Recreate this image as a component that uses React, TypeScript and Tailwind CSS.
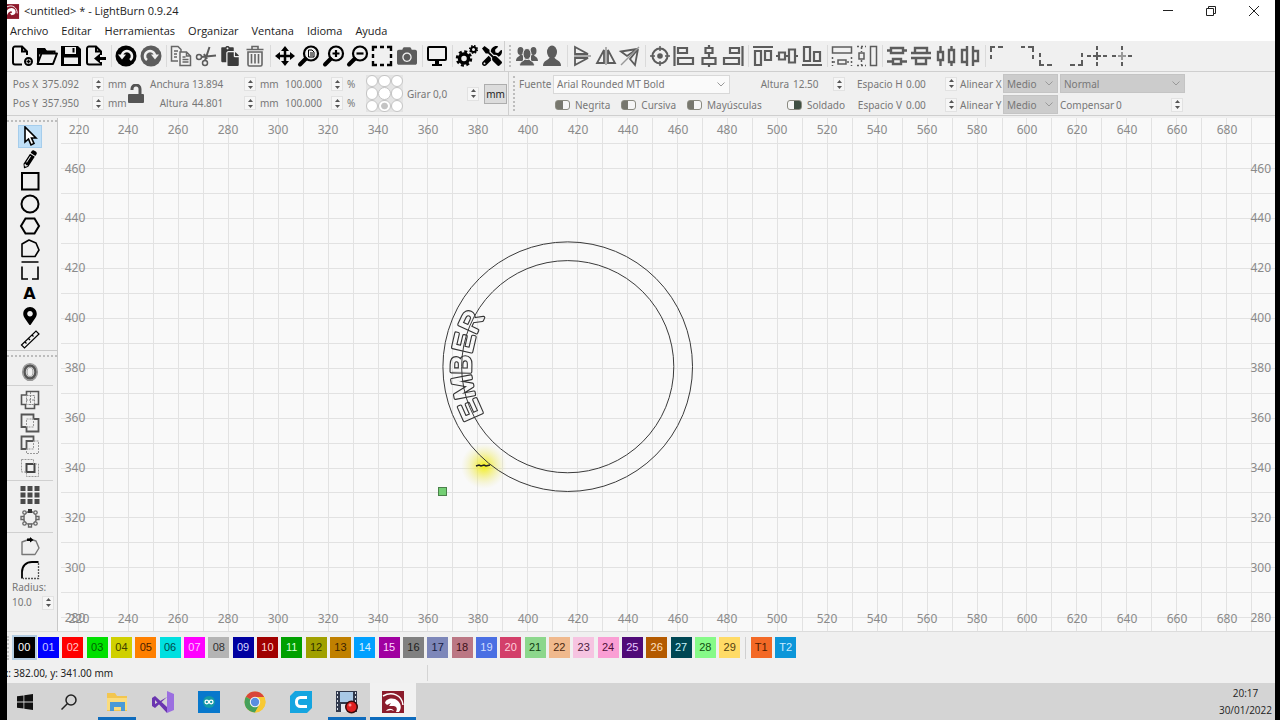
import React, { useId } from 'react';
import { FaCamera, FaMapMarkerAlt, FaPaste, FaPencilAlt, FaTools } from 'react-icons/fa';

const GRAY = '#5c5c5c';

interface IconProps {
  children: React.ReactNode;
  color?: string;
  sw?: number;
}

// Every toolbar icon is drawn on a 24 x 24 grid
const Ico: React.FC<IconProps> = ({ children, color = '#000', sw = 2 }) => (
  <svg
    viewBox="0 0 24 24"
    className="w-6 h-6 shrink-0"
    fill="none"
    stroke={color}
    strokeWidth={sw}
    aria-hidden="true"
  >
    {children}
  </svg>
);

const magnifier = (
  <>
    <circle cx="14" cy="9.5" r="7" />
    <path d="M8.5 15L3 20.5" strokeWidth="4" strokeLinecap="round" />
  </>
);

interface Tool {
  name: string;
  icon: React.ReactNode;
}

const fileTools: Tool[] = [
  {
    name: 'Nuevo',
    icon: (
      <Ico>
        <path d="M12 20.5H5a2 2 0 0 1-2-2V4.5a2 2 0 0 1 2-2h7l5 5V11M12 2.5v5h5" />
        <circle cx="18.5" cy="17.5" r="3.5" />
        <path d="M18.5 15.5v4M16.5 17.5h4" strokeWidth="1.5" />
      </Ico>
    ),
  },
  {
    name: 'Abrir',
    icon: (
      <Ico>
        <path d="M3 19V5h6l2 2.5h8.5V10" />
        <path d="M6.5 9.5H22L18 20H2.5z" fill="#f0f0f0" strokeLinejoin="round" />
        <path d="M2 12V4h8l2 3h6v2H7z" fill="#000" stroke="none" />
      </Ico>
    ),
  },
  {
    name: 'Guardar',
    icon: (
      <Ico>
        <path d="M2 2h17l3 3v17H2z" fill="#000" stroke="none" />
        <path d="M6 3h11v7H6zM5 13.5h14V20H5z" fill="#f0f0f0" stroke="none" />
        <path d="M14.5 4v4.5" />
      </Ico>
    ),
  },
  {
    name: 'Importar',
    icon: (
      <Ico>
        <path d="M17 18v2.5H5a2 2 0 0 1-2-2V4.5a2 2 0 0 1 2-2h7l5 5V11M12 2.5v5h5" />
        <path d="M22 14.5H14" strokeWidth="3" />
        <path d="M10 14.5l6-5v10z" fill="#000" stroke="none" />
      </Ico>
    ),
  },
];

const historyTools: Tool[] = [
  {
    name: 'Deshacer',
    icon: (
      <Ico>
        <circle cx="12" cy="12" r="10.5" fill="#000" stroke="none" />
        <path d="M8 12a5 5 0 1 1 8 4" stroke="#f0f0f0" strokeWidth="2.5" />
        <path d="M4 10.5h8l-4 5z" fill="#f0f0f0" stroke="none" />
      </Ico>
    ),
  },
  {
    name: 'Rehacer',
    icon: (
      <Ico>
        <circle cx="12" cy="12" r="10.5" fill={GRAY} stroke="none" />
        <path d="M16 12a5 5 0 1 0-8 4" stroke="#f0f0f0" strokeWidth="2.5" />
        <path d="M20 10.5h-8l4 5z" fill="#f0f0f0" stroke="none" />
      </Ico>
    ),
  },
];

const editTools: Tool[] = [
  {
    name: 'Copiar',
    icon: (
      <Ico color="#666" sw={1.5}>
        <path d="M9 17H2.5V2.5H9l3 3V8M5 7h4M5 10h3M5 13h3" />
        <path d="M11 8h6.5l4 4v9.5H11zM17.5 8v4h4M13.5 13h3M13.5 15.5h6M13.5 18h6" />
      </Ico>
    ),
  },
  {
    name: 'Cortar',
    icon: (
      <Ico color={GRAY}>
        <circle cx="5" cy="13" r="2.5" strokeWidth="1.5" />
        <circle cx="11" cy="19" r="2.5" strokeWidth="1.5" />
        <path d="M7 13l15-1.5M11 16.5L15.5 3M10 10l3 5" />
      </Ico>
    ),
  },
  { name: 'Pegar', icon: <FaPaste className="w-5 h-5 text-[#3c3c3c]" /> },
  {
    name: 'Borrar',
    icon: (
      <Ico color="#666" sw={1.6}>
        <path d="M3.5 5.5h17M9 5V2.5h6V5M5 8v12.5A1.5 1.5 0 0 0 6.5 22h11a1.5 1.5 0 0 0 1.5-1.5V8zM8.5 10v9.5M12 10v9.5M15.5 10v9.5" />
      </Ico>
    ),
  },
];

const viewTools: Tool[] = [
  {
    name: 'Mover vista',
    icon: (
      <Ico sw={2.5}>
        <path d="M12 5v14M5 12h14" />
        <path
          d="M12 2l4 5H8zM12 22l4-5H8zM2 12l5-4v8zM22 12l-5-4v8z"
          fill="#000"
          stroke="none"
        />
      </Ico>
    ),
  },
  {
    name: 'Ver página',
    icon: (
      <Ico sw={2.2}>
        {magnifier}
        <path d="M11.5 6H15l2 2v5h-5.5zM13 9h3M13 11h3" strokeWidth="1" />
      </Ico>
    ),
  },
  {
    name: 'Acercar',
    icon: (
      <Ico sw={2.2}>
        {magnifier}
        <path d="M14 6v7M10.5 9.5h7" />
      </Ico>
    ),
  },
  {
    name: 'Alejar',
    icon: (
      <Ico sw={2.2}>
        {magnifier}
        <path d="M10.5 9.5h7" />
      </Ico>
    ),
  },
  {
    name: 'Ver selección',
    icon: (
      <Ico sw={2.4}>
        <path d="M3 7V3h4M10 3h4M17 3h4v4M21 10v4M21 17v4h-4M14 21h-4M7 21H3v-4M3 14v-4" />
      </Ico>
    ),
  },
  { name: 'Cámara', icon: <FaCamera className="w-5 h-5 text-[#5c5c5c]" /> },
];

const previewTools: Tool[] = [
  {
    name: 'Vista previa',
    icon: (
      <Ico>
        <rect x="3" y="3" width="18" height="13" rx="1" />
        <path d="M12 16v4" strokeWidth="4" />
        <path d="M7 21h10" />
      </Ico>
    ),
  },
];

const settingTools: Tool[] = [
  {
    name: 'Ajustes',
    icon: (
      <Ico>
        <circle cx="9" cy="14.5" r="4.5" strokeWidth="3.5" />
        <circle cx="9" cy="14.5" r="7" strokeWidth="2.5" strokeDasharray="3 2.5" />
        <circle cx="18.5" cy="5.5" r="2.5" />
        <circle cx="18.5" cy="5.5" r="3.8" strokeWidth="1.5" strokeDasharray="1.5 1.5" />
      </Ico>
    ),
  },
  { name: 'Ajustes de máquina', icon: <FaTools className="w-5 h-5 text-black" /> },
];

const groupTools: Tool[] = [
  {
    name: 'Agrupar',
    icon: (
      <Ico color="#f0f0f0" sw={1}>
        <g fill={GRAY}>
          <ellipse cx="5.5" cy="7" rx="3" ry="4" stroke="none" />
          <ellipse cx="18.5" cy="7" rx="3" ry="4" stroke="none" />
          <path d="M1 17c0-4 3-4 4-6h3v6zM23 17c0-4-3-4-4-6h-3v6z" stroke="none" />
          <path d="M4.5 22c0-5 4-4.5 5.5-7h4c1.5 2.5 5.5 2 5.5 7z" />
          <ellipse cx="12" cy="10" rx="4" ry="5.5" />
        </g>
      </Ico>
    ),
  },
  {
    name: 'Desagrupar',
    icon: (
      <Ico>
        <g fill={GRAY} stroke="none">
          <ellipse cx="12" cy="8" rx="5" ry="6.5" />
          <path d="M3 22c0-6 5-5 7-9h4c2 4 7 3 7 9z" />
        </g>
      </Ico>
    ),
  },
];

const flipTools: Tool[] = [
  {
    name: 'Voltear vertical',
    icon: (
      <Ico color={GRAY} sw={1.8}>
        <path d="M5 3v7h13zM5 21v-7h13z" />
        <path d="M4 12h17" stroke="#999" strokeWidth="1.5" />
      </Ico>
    ),
  },
  {
    name: 'Voltear horizontal',
    icon: (
      <Ico color={GRAY} sw={1.8}>
        <path d="M3 19h7V6zM21 19h-7V6z" />
        <path d="M12 3v18" stroke="#999" strokeWidth="1.5" />
      </Ico>
    ),
  },
  {
    name: 'Reflejar en línea',
    icon: (
      <Ico color={GRAY} sw={1.8}>
        <path d="M3 7.5L19 5 9 12zM20 5l-3 16-5-6z" />
        <path d="M3 21L21 3" stroke="#999" strokeWidth="1.5" />
      </Ico>
    ),
  },
];

const alignTools: Tool[] = [
  {
    name: 'Centrar en página',
    icon: (
      <Ico color={GRAY}>
        <circle cx="12" cy="12" r="7.5" />
        <circle cx="12" cy="12" r="2.8" fill={GRAY} stroke="none" />
        <path d="M12 2v5M12 17v5M2 12h5M17 12h5" strokeWidth="1.5" />
      </Ico>
    ),
  },
  {
    name: 'Alinear izquierda',
    icon: (
      <Ico color={GRAY} sw={2.2}>
        <path d="M2.5 2v20M6 4h9v5H6zM6 14h15v6H6z" />
      </Ico>
    ),
  },
  {
    name: 'Alinear centro vertical',
    icon: (
      <Ico color={GRAY} sw={2.2}>
        <path d="M12 1v3M12 9v5M12 20v3M8.5 4h7v5h-7zM5.5 14h13v6h-13z" />
      </Ico>
    ),
  },
  {
    name: 'Alinear derecha',
    icon: (
      <Ico color={GRAY} sw={2.2}>
        <path d="M21.5 2v20M9 4h9v5H9zM3 14h15v6H3z" />
      </Ico>
    ),
  },
];

const alignRowTools: Tool[] = [
  {
    name: 'Alinear arriba',
    icon: (
      <Ico color={GRAY} sw={2.2}>
        <path d="M2 3h20M4 7h6v14H4zM14 7h6v9h-6z" />
      </Ico>
    ),
  },
  {
    name: 'Alinear centro horizontal',
    icon: (
      <Ico color={GRAY} sw={2.2}>
        <path d="M1 12h3M10 12h4M20 12h3M4 8.5h6v7H4zM14 5.5h6v13h-6z" />
      </Ico>
    ),
  },
  {
    name: 'Alinear abajo',
    icon: (
      <Ico color={GRAY} sw={2.2}>
        <path d="M2 21h20M4 3h6v14H4zM14 8h6v9h-6z" />
      </Ico>
    ),
  },
];

const sizeTools: Tool[] = [
  {
    name: 'Igualar ancho',
    icon: (
      <Ico color={GRAY} sw={1.5}>
        <path d="M2.5 3h19v6h-19zM8 16h8v4H8z" />
        <path d="M2.5 13v9M21.5 13v9M3 18h4M17 18h4" strokeDasharray="2 2" />
      </Ico>
    ),
  },
  {
    name: 'Igualar alto',
    icon: (
      <Ico color={GRAY} sw={1.5}>
        <path d="M15.5 2.5h6v19h-6zM4 9h5v6H4z" />
        <path d="M2 2.5h9M2 21.5h9M6.5 3v5M6.5 16v5" strokeDasharray="2 2" />
      </Ico>
    ),
  },
];

const distributeTools: Tool[] = [
  {
    name: 'Distribuir vertical',
    icon: (
      <Ico color={GRAY} sw={2.4}>
        <path d="M6 4h12v5H6zM8 15h8v5H8zM2 6.5h4M18 6.5h4M2 17.5h6M16 17.5h6" />
      </Ico>
    ),
  },
  {
    name: 'Juntar vertical',
    icon: (
      <Ico color={GRAY} sw={2.4}>
        <path d="M6 4h12v5H6zM7 14h10v6H7zM2 9h20M2 14h20" />
      </Ico>
    ),
  },
  {
    name: 'Distribuir horizontal',
    icon: (
      <Ico color={GRAY} sw={2.4}>
        <path d="M4 8h5v8H4zM15 6h5v12h-5zM6.5 2v6M6.5 16v6M17.5 2v4M17.5 18v4" />
      </Ico>
    ),
  },
  {
    name: 'Juntar horizontal',
    icon: (
      <Ico color={GRAY} sw={2.4}>
        <path d="M4 6h5v12H4zM15 7h5v10h-5zM9 2v20M15 2v20" />
      </Ico>
    ),
  },
];

const cornerTools: Tool[] = [
  { name: 'Esquina superior izquierda', icon: <Ico color={GRAY}><path d="M3 15v-4M3 8V3h4M10 3h5" /></Ico> },
  { name: 'Esquina superior derecha', icon: <Ico color={GRAY}><path d="M9 3h4M16 3h5v5M21 11v4" /></Ico> },
  { name: 'Esquina inferior izquierda', icon: <Ico color={GRAY}><path d="M3 9v4M3 16v5h4M10 21h5" /></Ico> },
  { name: 'Esquina inferior derecha', icon: <Ico color={GRAY}><path d="M21 9v4M21 16v5h-4M14 21H9" /></Ico> },
  { name: 'Centro de página', icon: <Ico color={GRAY}><path d="M12 2v4M12 8v8M12 18v4M2 12h4M8 12h8M18 12h4" /></Ico> },
  {
    name: 'Centro de máquina',
    icon: (
      <Ico color={GRAY}>
        <path d="M12 2v4M12 18v4M2 12h4M18 12h4" />
        <path d="M12 8v8M8 12h8" stroke="#999" />
      </Ico>
    ),
  },
];

const drawTools: Tool[] = [
  { name: 'Seleccionar', icon: <Ico sw={1.6}><path d="M7 3v15l3.5-3 2.5 6 3-1.5-2.5-5.5H18z" fill="#fff" /></Ico> },
  { name: 'Dibujar líneas', icon: <FaPencilAlt className="w-4 h-[18px] -rotate-12 text-black" /> },
  { name: 'Rectángulo', icon: <Ico><rect x="4" y="4" width="16.5" height="16.5" /></Ico> },
  { name: 'Elipse', icon: <Ico><circle cx="12" cy="12" r="8.5" /></Ico> },
  { name: 'Polígono', icon: <Ico><path d="M7.5 4.5h9L21 12l-4.5 7.5h-9L3 12z" /></Ico> },
  {
    name: 'Editar nodos',
    icon: (
      <Ico sw={1.6}>
        <path d="M4 7l7-4 7 3 3 7-4 6.5H4z" strokeLinejoin="round" />
      </Ico>
    ),
  },
  { name: 'Trazo', icon: <Ico sw={1.6}><path d="M3.5 3h17M10 20H4V7.5M14 20h6V7.5" /></Ico> },
  {
    name: 'Texto',
    icon: (
      <span className="font-['DejaVu_Sans',sans-serif] text-[16px] leading-4 font-bold text-black">A</span>
    ),
  },
  { name: 'Posición', icon: <FaMapMarkerAlt className="w-[14px] h-[18px] text-black" /> },
  {
    name: 'Medir',
    icon: (
      <Ico sw={1.2}>
        <path d="M3.5 18L18 4l3 3L6.500 21zM7 15l1.5 1.5M10.5 11.500L12 13M14 8l1.5 1.5" />
      </Ico>
    ),
  },
];

const booleanTools: Tool[] = [
  {
    name: 'Soldar',
    icon: (
      <Ico color="#555" sw={1.6}>
        <path d="M3.5 7h5V3.5h12v13h-4v4h-9v-4h-4z" />
        <path d="M8.5 7.5h8v9h-8zM12.5 4v13M8 12h9" strokeWidth="1" strokeDasharray="2 1" stroke="#888" />
      </Ico>
    ),
  },
  {
    name: 'Unión booleana',
    icon: (
      <Ico color="#555" sw={1.8}>
        <path d="M3.5 3.5h12V8h5v12.5h-12V16h-5z" />
        <path d="M8.5 8h7v8h-7z" strokeWidth="1" stroke="#999" strokeDasharray="2 1" />
      </Ico>
    ),
  },
  {
    name: 'Sustracción booleana',
    icon: (
      <Ico color="#555" sw={1.8}>
        <path d="M3.5 3.5h12V8h-7v8h-5z" />
        <path d="M15.5 8h5v12.5h-12V16h7z" strokeWidth="1" stroke="#999" strokeDasharray="2 1" />
      </Ico>
    ),
  },
  {
    name: 'Intersección booleana',
    icon: (
      <Ico color="#444" sw={2}>
        <path d="M8.5 8h8v8h-8z" />
        <path d="M3.5 3.5h12V8h5v12.5h-12V16h-5z" strokeWidth="1" stroke="#999" strokeDasharray="2 1" />
      </Ico>
    ),
  },
];

const offsetTools: Tool[] = [
  {
    name: 'Desplazar formas',
    icon: (
      <Ico color="#555" sw={2}>
        <ellipse cx="12" cy="12" rx="7.5" ry="8.5" stroke="#999" strokeWidth="1.2" />
        <ellipse cx="12" cy="12" rx="5.5" ry="6.5" strokeWidth="2.5" />
        <ellipse cx="12" cy="12" rx="3" ry="4.5" stroke="#999" strokeWidth="1" />
      </Ico>
    ),
  },
];

const arrayTools: Tool[] = [
  {
    name: 'Matriz de cuadrícula',
    icon: (
      <Ico>
        <path
          d="M2.5 3h5v5h-5zM9.5 3h5v5h-5zM16.5 3h5v5h-5zM2.5 9.5h5v5h-5zM9.5 9.5h5v5h-5zM16.5 9.5h5v5h-5zM2.5 16h5v5h-5zM9.5 16h5v5h-5zM16.5 16h5v5h-5z"
          fill="#4a4a4a"
          stroke="none"
        />
      </Ico>
    ),
  },
  {
    name: 'Matriz circular',
    icon: (
      <Ico color="#666" sw={1.3}>
        <circle cx="12" cy="12" r="6.5" />
        <g fill="#f0f0f0">
          <circle cx="17.5" cy="6.5" r="1.7" />
          <circle cx="6.5" cy="6.5" r="1.7" />
          <circle cx="17.5" cy="17.5" r="1.7" />
          <circle cx="6.5" cy="17.5" r="1.7" />
          <path d="M3 10.5h3v3H3zM18 10.5h3v3h-3zM10.5 18h3v3h-3z" />
        </g>
        <path d="M10 3h4v4h-4z" fill="#333" stroke="none" />
      </Ico>
    ),
  },
];

const shapeTools: Tool[] = [
  {
    name: 'Inicio de forma',
    icon: (
      <Ico color="#777" sw={1.4}>
        <path d="M4 7l8-3 6 2 3 7-4 6.5H4z" strokeLinejoin="round" />
        <path d="M9 3.5h3V2l3.5 3L12 7.5V6H9z" fill="#000" stroke="none" />
      </Ico>
    ),
  },
  {
    name: 'Redondear esquinas',
    icon: (
      <Ico sw={1.8}>
        <path d="M4 20.5V14C4 8 8 4 14 4h6.5" />
        <path d="M20.5 5v15.5H5" strokeWidth="1.3" strokeDasharray="2 1" stroke="#555" />
      </Ico>
    ),
  },
];

const layers = [
  ['00', '#000000', '#ffffff'], ['01', '#0000ff', '#c8c8ff'], ['02', '#ff0000', '#ffc8c8'],
  ['03', '#00e000', '#006000'], ['04', '#d0d000', '#404000'], ['05', '#ff8000', '#4a2000'],
  ['06', '#00e0e0', '#004848'], ['07', '#ff00ff', '#ffc8ff'], ['08', '#b4b4b4', '#303030'],
  ['09', '#0000a0', '#d8d8ff'], ['10', '#a00000', '#ffd8d8'], ['11', '#00a000', '#d8ffd8'],
  ['12', '#a0a000', '#303000'], ['13', '#c08000', '#3c2400'], ['14', '#00a0ff', '#d8f0ff'],
  ['15', '#a000a0', '#ffd8ff'], ['16', '#808080', '#202020'], ['17', '#7d87b9', '#181c40'],
  ['18', '#bb7784', '#3c1018'], ['19', '#4a6fe3', '#d0dcff'], ['20', '#d33f6a', '#ffd0dc'],
  ['21', '#8cd78c', '#104010'], ['22', '#f0b98d', '#4c2810'], ['23', '#f6c4e1', '#4c2040'],
  ['24', '#fa9ed4', '#501038'], ['25', '#500a78', '#e8c8ff'], ['26', '#b45a00', '#ffe0c0'],
  ['27', '#004754', '#c8f4fc'], ['28', '#86fa88', '#104c10'], ['29', '#ffdb66', '#504010'],
];

const toolLayers = [
  ['T1', '#f36926', '#501c00'], ['T2', '#0c96d9', '#c8ecff'],
];

const Divider: React.FC = () => (
  <div className="w-1.5 flex justify-center shrink-0">
    <div className="w-px h-[22px] bg-[#dadada]" />
  </div>
);

const Grip: React.FC = () => (
  <div className="w-0 h-[calc(100%-8px)] mx-1 shrink-0 border-l-2 border-dotted border-[#bdbdbd]" />
);

const ToolGroup: React.FC<{ tools: Tool[]; width: string }> = ({ tools, width }) => (
  <div className={`flex shrink-0 ${width}`}>
    {tools.map(t => (
      <button key={t.name} type="button" aria-label={t.name} className="flex-1 min-w-0 h-6 flex items-center justify-center">
        {t.icon}
      </button>
    ))}
  </div>
);

const ToolStack: React.FC<{ tools: Tool[]; height: string; active?: string }> = ({ tools, height, active }) => (
  <div className={`flex flex-col items-center shrink-0 pr-[5px] ${height}`}>
    {tools.map(t => (
      <button
        key={t.name}
        type="button"
        aria-label={t.name}
        className={`flex-1 min-h-0 w-6 flex items-center justify-center ${t.name === active ? 'bg-[#bfdff7] outline -outline-offset-1 outline-[#a5cdec]' : ''}`}
      >
        {t.icon}
      </button>
    ))}
  </div>
);

const Spinner: React.FC = () => (
  <div className="w-3 h-[14px] shrink-0 flex flex-col border border-[#e2e2e2] bg-[#f6f6f6]">
    <button type="button" aria-label="Aumentar" className="flex-1 min-h-0 flex items-center justify-center">
      <svg viewBox="0 0 5 3" className="w-[5px] h-[3px]" fill="#555"><path d="M0 3L2.5 0 5 3z" /></svg>
    </button>
    <button type="button" aria-label="Disminuir" className="flex-1 min-h-0 flex items-center justify-center">
      <svg viewBox="0 0 5 3" className="w-[5px] h-[3px]" fill="#555"><path d="M0 0h5L2.5 3z" /></svg>
    </button>
  </div>
);

interface FieldProps {
  label?: string;
  hint?: string;
  value: string;
  unit?: string;
  labelWidth?: string;
  inputWidth: string;
}

const Field: React.FC<FieldProps> = ({ label, hint, value, unit, labelWidth = '', inputWidth }) => {
  const id = useId();
  return (
    <div className="flex items-center h-[19px] whitespace-nowrap">
      {label && <label htmlFor={id} className={`mr-1 text-right ${labelWidth}`}>{label}</label>}
      <input id={id} aria-label={hint} defaultValue={value} className={`bg-transparent outline-none ${inputWidth}`} />
      <Spinner />
      {unit && <span className="ml-1 w-4">{unit}</span>}
    </div>
  );
};

const Combo: React.FC<{ label: string; value: string; className: string; id?: string }> = ({ label, value, className, id }) => (
  <div className={`relative h-[19px] border ${className}`}>
    <select id={id} aria-label={label} className="appearance-none block w-full h-full px-[3px] bg-transparent outline-none leading-4">
      <option>{value}</option>
    </select>
    <svg viewBox="0 0 8 5" className="absolute right-1 top-1.5 w-2 h-[5px] pointer-events-none" fill="none" stroke="#999">
      <path d="M.5.5L4 4 7.5.5" />
    </svg>
  </div>
);

const Toggle: React.FC<{ label: string; on?: boolean }> = ({ label, on }) => (
  <label className="flex items-center gap-[5px] whitespace-nowrap">
    <input
      type="checkbox"
      defaultChecked={on}
      className="appearance-none w-[15px] h-[10px] rounded-[3px] border border-[#8a8a80] bg-linear-to-r from-[#77776e] from-50% to-[#f6f6f6] to-50% checked:from-[#f6f6f6] checked:to-[#3f4f42]"
    />
    {label}
  </label>
);

const Titlebar: React.FC = () => (
  <header className="h-[22px] bg-white flex items-center text-[#222]">
    <svg viewBox="0 0 14 16" className="w-[13px] h-[15px] mr-1" aria-hidden="true">
      <path d="M0 0h13v16H0z" fill="#8e1a2c" />
      <path d="M0 7c3-4 8-3 9 0 1 3-1 5-4 5l-2-2c2 0 3-1 2-2-2-1-4 2-5 4z" fill="#fff" />
      <path d="M0 3c6-3 11 1 11 7" stroke="#fff" fill="none" />
    </svg>
    <h1 className="font-['Open_Sans','Noto_Sans',sans-serif] text-[11px]">&lt;untitled&gt; * - LightBurn 0.9.24</h1>
    <div className="ml-auto flex h-full">
      <button type="button" aria-label="Minimizar" className="w-[43px] flex items-center justify-center">
        <svg viewBox="0 0 10 10" className="w-[10px] h-[10px]" stroke="#222" fill="none"><path d="M0 4.5h10" /></svg>
      </button>
      <button type="button" aria-label="Restaurar" className="w-[43px] flex items-center justify-center">
        <svg viewBox="0 0 10 10" className="w-[10px] h-[10px]" stroke="#222" fill="none"><path d="M.5 2.5h7v7h-7zM2.5 2.5v-2h7v7h-2" /></svg>
      </button>
      <button type="button" aria-label="Cerrar" className="w-[43px] flex items-center justify-center">
        <svg viewBox="0 0 10 10" className="w-[10px] h-[10px]" stroke="#222" fill="none"><path d="M0 0l10 10M10 0L0 10" /></svg>
      </button>
    </div>
  </header>
);

const menus = ['Archivo', 'Editar', 'Herramientas', 'Organizar', 'Ventana', 'Idioma', 'Ayuda'];

const MenuBar: React.FC = () => (
  <nav className="h-[19px] bg-white flex items-center gap-[13px] pl-[3px] font-['Open_Sans','Noto_Sans',sans-serif] text-[11px] text-[#222]">
    {menus.map(m => <button key={m} type="button">{m}</button>)}
  </nav>
);

const MainToolbar: React.FC = () => (
  <div className="h-[31px] flex items-center border-b border-[#cfcfcf] pl-[3px]">
    <ToolGroup tools={fileTools} width="w-[98px]" />
    <Divider />
    <ToolGroup tools={historyTools} width="w-[49px]" />
    <Divider />
    <ToolGroup tools={editTools} width="w-[98px]" />
    <Divider />
    <ToolGroup tools={viewTools} width="w-[146px]" />
    <Divider />
    <ToolGroup tools={previewTools} width="w-6" />
    <Divider />
    <ToolGroup tools={settingTools} width="w-[49px]" />
    <div className="w-px h-full bg-[#cfcfcf]" />
    <Grip />
    <ToolGroup tools={groupTools} width="w-[49px]" />
    <Divider />
    <ToolGroup tools={flipTools} width="w-[72px]" />
    <Divider />
    <ToolGroup tools={alignTools} width="w-[97px]" />
    <Divider />
    <ToolGroup tools={alignRowTools} width="w-[73px]" />
    <Divider />
    <ToolGroup tools={sizeTools} width="w-[49px]" />
    <Divider />
    <ToolGroup tools={distributeTools} width="w-[97px]" />
    <Divider />
    <ToolGroup tools={cornerTools} width="w-[146px]" />
  </div>
);

const anchors = ['SI', 'S', 'SD', 'I', 'C', 'D', 'II', 'B', 'ID'];

const PropertiesBar: React.FC = () => {
  const fontId = useId();
  return (
    <div className="h-11 flex items-center border-b border-[#cfcfcf] pl-[5px] text-[10px] leading-4 text-[#777]">
      <div>
        <Field label="Pos X" value="375.092" unit="mm" labelWidth="w-[26px]" inputWidth="w-[50px]" />
        <Field label="Pos Y" value="357.950" unit="mm" labelWidth="w-[26px]" inputWidth="w-[50px]" />
      </div>
      <button type="button" aria-label="Bloquear proporción" className="ml-1 mr-1.5">
        <svg viewBox="0 0 16 20" className="w-4 h-5" fill="none" stroke="#555" strokeWidth="3">
          <path d="M4 6V5a4 4 0 0 1 8 0v6" />
          <rect x="0" y="10" width="16" height="9" rx="1" fill="#555" stroke="none" />
        </svg>
      </button>
      <div>
        <Field label="Anchura" value="13.894" unit="mm" labelWidth="w-[38px]" inputWidth="w-[52px]" />
        <Field label="Altura" value="44.801" unit="mm" labelWidth="w-[38px]" inputWidth="w-[52px]" />
      </div>
      <div className="ml-[9px]">
        <Field hint="Escala horizontal" value="100.000" unit="%" inputWidth="w-[46px]" />
        <Field hint="Escala vertical" value="100.000" unit="%" inputWidth="w-[46px]" />
      </div>
      <div className="ml-[3px] w-[37px] h-[37px] grid grid-cols-3 bg-[#e4e4e4]">
        {anchors.map(a => (
          <input
            key={a}
            type="radio"
            name="anchor"
            aria-label={a}
            defaultChecked={a === 'B'}
            className="appearance-none rounded-full border border-[#c4c4c4] bg-white checked:bg-[radial-gradient(circle,#c4c4c4_40%,#fff_50%)]"
          />
        ))}
      </div>
      <div className="ml-1 mr-[5px]">
        <Field label="Girar" value="0,0" labelWidth="w-[22px]" inputWidth="w-[34px]" />
      </div>
      <button type="button" className="w-[23px] h-5 border border-[#adadad] bg-[#dcdcdc] text-[#222]">mm</button>
      <div className="ml-px w-px h-full bg-[#cfcfcf]" />
      <Grip />
      <div className="w-[326px] pt-0.5 flex flex-col gap-px">
        <div className="flex items-center">
          <label htmlFor={fontId} className="w-[34px]">Fuente</label>
          <Combo id={fontId} label="Fuente" value="Arial Rounded MT Bold" className="w-[177px] border-[#d8d8d8] bg-[#fafafa]" />
          <div className="ml-auto">
            <Field label="Altura" value="12.50" labelWidth="w-[29px]" inputWidth="w-[40px]" />
          </div>
        </div>
        <div className="flex items-center h-5 pl-9 gap-[11px]">
          <Toggle label="Negrita" />
          <Toggle label="Cursiva" />
          <Toggle label="Mayúsculas" />
          <div className="ml-auto"><Toggle label="Soldado" on /></div>
        </div>
      </div>
      <div className="ml-3 pt-px flex flex-col gap-0.5">
        <Field label="Espacio H" value="0.00" labelWidth="w-[45px]" inputWidth="w-[39px]" />
        <Field label="Espacio V" value="0.00" labelWidth="w-[45px]" inputWidth="w-[39px]" />
      </div>
      <div className="ml-[3px] pt-px flex flex-col gap-0.5">
        {['X', 'Y'].map(axis => (
          <div key={axis} className="flex items-center whitespace-nowrap">
            <span className="w-[43px]">Alinear {axis}</span>
            <Combo label={`Alinear ${axis}`} value="Medio" className="w-[55px] border-[#c4c4c4] bg-[#cccccc]" />
          </div>
        ))}
      </div>
      <div className="ml-0.5 pt-px flex flex-col gap-0.5">
        <Combo label="Modo" value="Normal" className="w-[125px] border-[#c4c4c4] bg-[#cccccc]" />
        <Field label="Compensar" value="0" labelWidth="w-[52px]" inputWidth="w-[55px]" />
      </div>
    </div>
  );
};

const Sidebar: React.FC = () => (
  <aside className="w-[51px] shrink-0 border-r border-[#c8c8c8] flex flex-col text-[10px] text-[#777]">
    <div className="mt-0.5 mb-[3px] h-0 border-t-2 border-dotted border-[#bdbdbd] shrink-0" />
    <ToolStack tools={drawTools} height="h-[225px]" active="Seleccionar" />
    <div className="h-px bg-[#c8c8c8] mb-1 shrink-0" />
    <div className="h-0 border-t-2 border-dotted border-[#bdbdbd] mb-[3px] shrink-0" />
    <ToolStack tools={offsetTools} height="h-6" />
    <div className="h-px bg-[#d0d0d0] mt-px mb-[3px] mr-1 shrink-0" />
    <ToolStack tools={booleanTools} height="h-[90px]" />
    <div className="h-px bg-[#d0d0d0] mt-px mb-[3px] mr-1 shrink-0" />
    <ToolStack tools={arrayTools} height="h-[45px]" />
    <div className="h-px bg-[#d0d0d0] mt-[3px] mb-[3px] mr-1 shrink-0" />
    <ToolStack tools={shapeTools} height="h-[45px]" />
    <label htmlFor="radius" className="pl-[5px] leading-[13px]">Radius:</label>
    <div className="flex items-center pl-[5px] h-[17px]">
      <input id="radius" defaultValue="10.0" className="w-[30px] bg-transparent outline-none" />
      <Spinner />
    </div>
  </aside>
);

// Workspace millimetres to view pixels
const SCALE = 2.496;
const toX = (mm: number) => (mm - 220) * SCALE + 20.5;
const toY = (mm: number) => (460 - mm) * SCALE + 50.5;

const range = (from: number, to: number, step: number) =>
  Array.from({ length: Math.floor((to - from) / step) + 1 }, (_, i) => from + i * step);

const letters = [
  { char: 'E', angle: -114 },
  { char: 'M', angle: -101 },
  { char: 'B', angle: -89 },
  { char: 'E', angle: -77 },
  { char: 'R', angle: -65 },
];

const Workspace: React.FC = () => {
  const cx = toX(416);
  const cy = toY(380.6);
  const arcText = letters.map((l, i) => (
    <text
      key={i}
      fontFamily="'Liberation Sans', Arial, sans-serif"
      fontSize="28"
      textAnchor="middle"
      strokeLinejoin="round"
      transform={`translate(${cx} ${cy}) rotate(${l.angle}) translate(0 -97)`}
    >
      {l.char}
    </text>
  ));
  return (
    <main className="flex-1 min-w-0 relative bg-[#f9f9f9] overflow-hidden">
      <svg className="absolute inset-0 w-full h-full" fontFamily="'Noto Sans', sans-serif" fontSize="12">
        <defs>
          <radialGradient id="glow">
            <stop offset="0" stopColor="#f2ee00" stopOpacity="0.9" />
            <stop offset="0.35" stopColor="#f0ea30" stopOpacity="0.6" />
            <stop offset="1" stopColor="#e8e4a0" stopOpacity="0" />
          </radialGradient>
          {/* Cuts the inside out of the letters, so only a rounded rim is left */}
          <mask id="rim" maskUnits="userSpaceOnUse" x="370" y="170" width="80" height="160">
            <rect x="370" y="170" width="80" height="160" fill="#fff" />
            <g fill="#000" stroke="#000" strokeWidth="1.4">{arcText}</g>
          </mask>
        </defs>
        <g stroke="#e2e2e2" shapeRendering="crispEdges">
          {range(220, 690, 10).map(x => <line key={x} x1={toX(x)} x2={toX(x)} y1="0" y2="100%" />)}
          {range(280, 470, 10).map(y => <line key={y} x1="3" x2="100%" y1={toY(y)} y2={toY(y)} />)}
        </g>
        <g fill="#8a8a8a" textAnchor="middle">
          {range(220, 680, 20).map(x => <text key={x} x={Math.round(toX(x))} y="16">{x}</text>)}
          {range(280, 460, 20).map(y => <text key={y} x="17" y={Math.round(toY(y)) + 4}>{y}</text>)}
        </g>
        <g fill="#8a8a8a" textAnchor="middle">
          {range(220, 680, 20).map(x => <text key={x} x={Math.round(toX(x))} y="505">{x}</text>)}
        </g>
        <svg x="100%" overflow="visible">
          <g fill="#8a8a8a" textAnchor="end">
            {range(280, 460, 20).map(y => <text key={y} x="-4" y={Math.round(toY(y)) + 4}>{y}</text>)}
          </g>
        </svg>

        <circle cx="426" cy="348" r="23" fill="url(#glow)" />

        <g fill="none" stroke="#3a3a3a">
          <circle cx={cx} cy={cy} r={50 * SCALE} />
          <circle cx={cx} cy={cy} r={42.5 * SCALE} />
        </g>
        <g mask="url(#rim)" fill="#333" stroke="#333" strokeWidth="3.6">{arcText}</g>
        <path d="M418 348l3-1 2 1 3-1 2 1 4-1" stroke="#222" strokeWidth="1.5" fill="none" />
        <rect x="380.5" y="369.5" width="8" height="8" fill="#74cf74" stroke="#4a804a" />
      </svg>
    </main>
  );
};

const Swatch: React.FC<{ layer: string[]; active?: boolean }> = ({ layer, active }) => (
  <div className="flex-1 flex justify-center">
    <button
      type="button"
      className={`w-[21px] h-[21px] font-['Liberation_Sans',Arial,sans-serif] text-[11px] leading-[21px] text-center ${active ? 'outline-2 outline-[#b4cde2]' : ''}`}
      style={{ backgroundColor: layer[1], color: layer[2] }}
    >
      {layer[0]}
    </button>
  </div>
);

const Palette: React.FC = () => (
  <div className="h-8 flex items-center border-t border-[#dcdcdc]">
    <div className="h-6 w-0 border-l-2 border-dotted border-[#c8c8c8]" />
    <div className="ml-[3px] w-[730px] flex shrink-0">
      {layers.map((l, i) => <Swatch key={l[0]} layer={l} active={i === 0} />)}
    </div>
    <div className="ml-[3px] mr-[3px] w-px h-[22px] bg-[#d0d0d0]" />
    <div className="w-[49px] flex shrink-0">
      {toolLayers.map(l => <Swatch key={l[0]} layer={l} />)}
    </div>
  </div>
);

const StatusBar: React.FC = () => (
  <div className="h-5 flex items-center overflow-hidden text-[#222]">
    <div className="w-[421px] h-4 border-r border-[#d4d4d4] overflow-hidden">
      <span className="block -ml-1 leading-[17px] text-[10px]">x: 382.00, y: 341.00 mm</span>
    </div>
  </div>
);

interface TaskApp {
  name: string;
  running?: boolean;
  active?: boolean;
  art: React.ReactNode;
}

const taskApps: TaskApp[] = [
  {
    name: 'Explorador de archivos',
    running: true,
    art: (
      <>
        <path d="M2 3h8l2 3h10v15H2z" fill="#f3c64f" />
        <path d="M2 8h20v12H2z" fill="#fbdc7d" />
        <path d="M5 12h15v9h-4v-4H9v4H5z" fill="#4a9ad6" />
      </>
    ),
  },
  {
    name: 'Visual Studio',
    art: (
      <>
        <path d="M16 1l7 3v16l-7 3z" fill="#9b6fe0" />
        <path d="M16 1v6L4 18l-3-2V8l3-2 12 11v6L4 10v4L16 7z" fill="#6a35b0" />
      </>
    ),
  },
  {
    name: 'Arduino',
    art: (
      <>
        <path d="M1 1h22v22H1z" fill="#0878cc" />
        <circle cx="12" cy="12" r="6" fill="#149aa5" />
        <g fill="none" stroke="#fff" strokeWidth="1.3">
          <circle cx="9.8" cy="12" r="1.8" />
          <circle cx="14.2" cy="12" r="1.8" />
        </g>
      </>
    ),
  },
  {
    name: 'Chrome',
    art: (
      <>
        <circle cx="12" cy="12" r="10.5" fill="#f8c933" />
        <path d="M12 12L2.9 6.8A10.5 10.5 0 0 1 21.1 6.8z" fill="#d9453a" />
        <path d="M2.9 6.8A10.5 10.5 0 0 0 12 22.5l4.5-8z" fill="#46a05a" />
        <path d="M12 7h9.2A10.5 10.5 0 0 1 12 22.5l4.5-8z" fill="#f8c933" />
        <circle cx="12" cy="12" r="5.2" fill="#f4f4f4" />
        <circle cx="12" cy="12" r="4.2" fill="#5a8ee0" />
      </>
    ),
  },
  {
    name: 'Cura',
    art: (
      <>
        <path d="M6 1h17v17l-5 5H1V6z" fill="#15a5e0" />
        <path d="M18 7.5h-6.5a4 4 0 0 0-4 4v1a4 4 0 0 0 4 4H18" fill="none" stroke="#fff" strokeWidth="3" />
      </>
    ),
  },
  {
    name: 'Grabador de pantalla',
    running: true,
    art: (
      <>
        <path d="M1 1h21v21H1z" fill="#31394c" />
        <path d="M5 2h13v10H5z" fill="#a9c9e6" />
        <path d="M6 14h10v8H6z" fill="#e4e8ee" />
        <path d="M2.5 2v19M20.5 2v19" stroke="#dde2ea" strokeDasharray="2 2" />
        <circle cx="16.5" cy="17" r="6.5" fill="#3b0a0a" />
        <circle cx="16.5" cy="17" r="5" fill="#e02020" />
        <circle cx="15" cy="15" r="1.5" fill="#ff9090" />
      </>
    ),
  },
  {
    name: 'LightBurn',
    running: true,
    active: true,
    art: (
      <>
        <path d="M1 1h22v22H1z" fill="#8b1c2c" />
        <path d="M2 6C11 1 21 5 22 15" fill="none" stroke="#fff" strokeWidth="1.5" />
        <path d="M4 13c1-5 9-6 13-2 3 3 4 7 1 11h-3c2-4 0-6-3-6H8l2-3-4 2z" fill="#fff" />
        <path d="M5 21c2-3 6-3 8 0l-3-1z" fill="#fff" />
      </>
    ),
  },
];

const Taskbar: React.FC = () => (
  <footer className="h-[37px] shrink-0 bg-[#d4d4d4] flex items-stretch">
    <button type="button" aria-label="Inicio" className="w-9 flex items-center justify-center">
      <svg viewBox="0 0 16 16" className="w-4 h-4" fill="#111">
        <path d="M0 2.3l6.5-.9v6.2H0zM7.3 1.3L16 0v7.600H7.3zM0 8.4h6.5v6.2L0 13.700zM7.3 8.4H16V16l-8.7-1.2z" />
      </svg>
    </button>
    <button type="button" aria-label="Buscar" className="w-[51px] flex items-center justify-center">
      <svg viewBox="0 0 16 16" className="w-4 h-4" fill="none" stroke="#222" strokeWidth="1.5">
        <circle cx="10" cy="6" r="5" />
        <path d="M6.5 9.5l-6 6" />
      </svg>
    </button>
    {taskApps.map(app => (
      <button
        key={app.name}
        type="button"
        aria-label={app.name}
        className={`relative w-[46px] flex items-center justify-center ${app.active ? 'bg-[#f1f1f1]' : ''}`}
      >
        <svg viewBox="0 0 24 24" className="w-6 h-6">{app.art}</svg>
        {app.running && <span className={`absolute bottom-0 h-[3px] bg-[#0f6cbd] ${app.active ? 'inset-x-0' : 'inset-x-1'}`} />}
      </button>
    ))}
    <time className="ml-auto pr-[3px] flex flex-col justify-center items-center font-['Open_Sans','Noto_Sans',sans-serif] text-[10px] leading-[17px] text-[#222]">
      <span>20:17</span>
      <span>30/01/2022</span>
    </time>
  </footer>
);

export default function App() {
  return (
    <div className="h-screen flex flex-col overflow-hidden bg-[#f0f0f0] border-l-[7px] border-r-[5px] border-black font-['Noto_Sans','Open_Sans',sans-serif]">
      <Titlebar />
      <MenuBar />
      <MainToolbar />
      <PropertiesBar />
      <div className="flex-1 min-h-0 flex mt-0.5">
        <Sidebar />
        <Workspace />
      </div>
      <Palette />
      <StatusBar />
      <Taskbar />
    </div>
  );
}
